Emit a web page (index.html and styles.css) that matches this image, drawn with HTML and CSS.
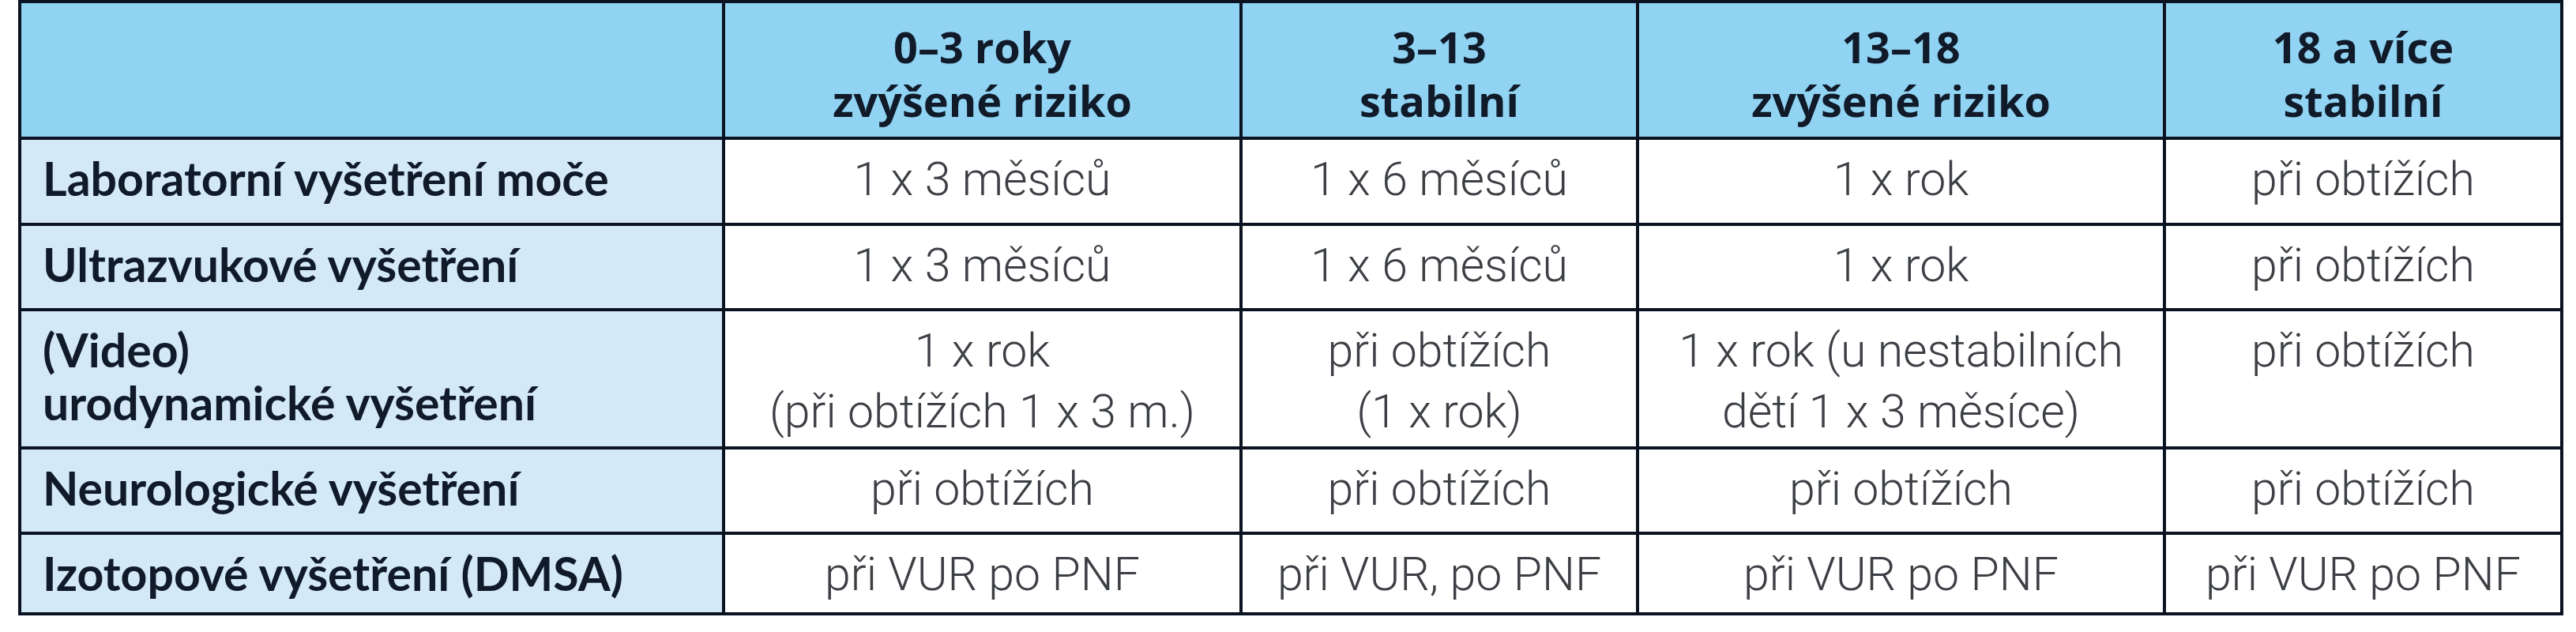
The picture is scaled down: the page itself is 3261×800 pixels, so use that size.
FILE: index.html
```html
<!DOCTYPE html>
<html lang="cs">
<head>
<meta charset="utf-8">
<title>Vyšetření</title>
<link rel="stylesheet" href="styles.css">
</head>
<body>
<div class="page">
  <div class="grid">
    <div class="cell head corner"></div>
    <div class="cell head"><span class="line">0–3 roky</span><span class="line">zvýšené riziko</span></div>
    <div class="cell head"><span class="line">3–13</span><span class="line">stabilní</span></div>
    <div class="cell head"><span class="line">13–18</span><span class="line">zvýšené riziko</span></div>
    <div class="cell head"><span class="line">18 a více</span><span class="line">stabilní</span></div>

    <div class="cell label">Laboratorní vyšetření moče</div>
    <div class="cell data">1 x 3 měsíců</div>
    <div class="cell data">1 x 6 měsíců</div>
    <div class="cell data">1 x rok</div>
    <div class="cell data">při obtížích</div>

    <div class="cell label">Ultrazvukové vyšetření</div>
    <div class="cell data">1 x 3 měsíců</div>
    <div class="cell data">1 x 6 měsíců</div>
    <div class="cell data">1 x rok</div>
    <div class="cell data">při obtížích</div>

    <div class="cell label"><span class="line">(Video)</span><span class="line">urodynamické vyšetření</span></div>
    <div class="cell data"><span class="line">1 x rok</span><span class="line">(při obtížích 1 x 3 m.)</span></div>
    <div class="cell data"><span class="line">při obtížích</span><span class="line">(1 x rok)</span></div>
    <div class="cell data"><span class="line">1 x rok (u nestabilních</span><span class="line">dětí 1 x 3 měsíce)</span></div>
    <div class="cell data">při obtížích</div>

    <div class="cell label">Neurologické vyšetření</div>
    <div class="cell data">při obtížích</div>
    <div class="cell data">při obtížích</div>
    <div class="cell data">při obtížích</div>
    <div class="cell data">při obtížích</div>

    <div class="cell label">Izotopové vyšetření (DMSA)</div>
    <div class="cell data">při VUR po PNF</div>
    <div class="cell data">při VUR, po PNF</div>
    <div class="cell data">při VUR po PNF</div>
    <div class="cell data">při VUR po PNF</div>
  </div>
</div>
</body>
</html>
```

FILE: styles.css
```css
html, body {
  margin: 0;
  padding: 0;
  background: #ffffff;
}

.page {
  padding: 0 0 0 23px;
}

.grid {
  display: grid;
  width: max-content;
  grid-template-columns: 887px 651px 498px 663px 499px;
  grid-template-rows: 169px 105px 104px 171px 104px 98px;
  gap: 4px;
  padding: 4px;
  background: #0b1322;
}

.cell {
  display: flex;
  flex-direction: column;
  box-sizing: border-box;
  overflow: hidden;
  white-space: nowrap;
}

.line {
  display: block;
}

.head {
  background: #90d3f2;
  align-items: center;
  padding-top: 21px;
  font-family: "Open Sans", "Liberation Sans", sans-serif;
  font-weight: 700;
  font-size: 54px;
  line-height: 68px;
  color: #101a29;
}

.label {
  background: #d3e9f7;
  padding: 15px 0 0 27px;
  font-family: Lato, "Open Sans", sans-serif;
  font-weight: 700;
  font-size: 59px;
  line-height: 67px;
  color: #101a29;
}

.data {
  background: #ffffff;
  align-items: center;
  padding-top: 11px;
  font-family: Roboto, "Liberation Sans", sans-serif;
  font-weight: 300;
  font-size: 59px;
  line-height: 77px;
  color: #3c3f44;
}
```
